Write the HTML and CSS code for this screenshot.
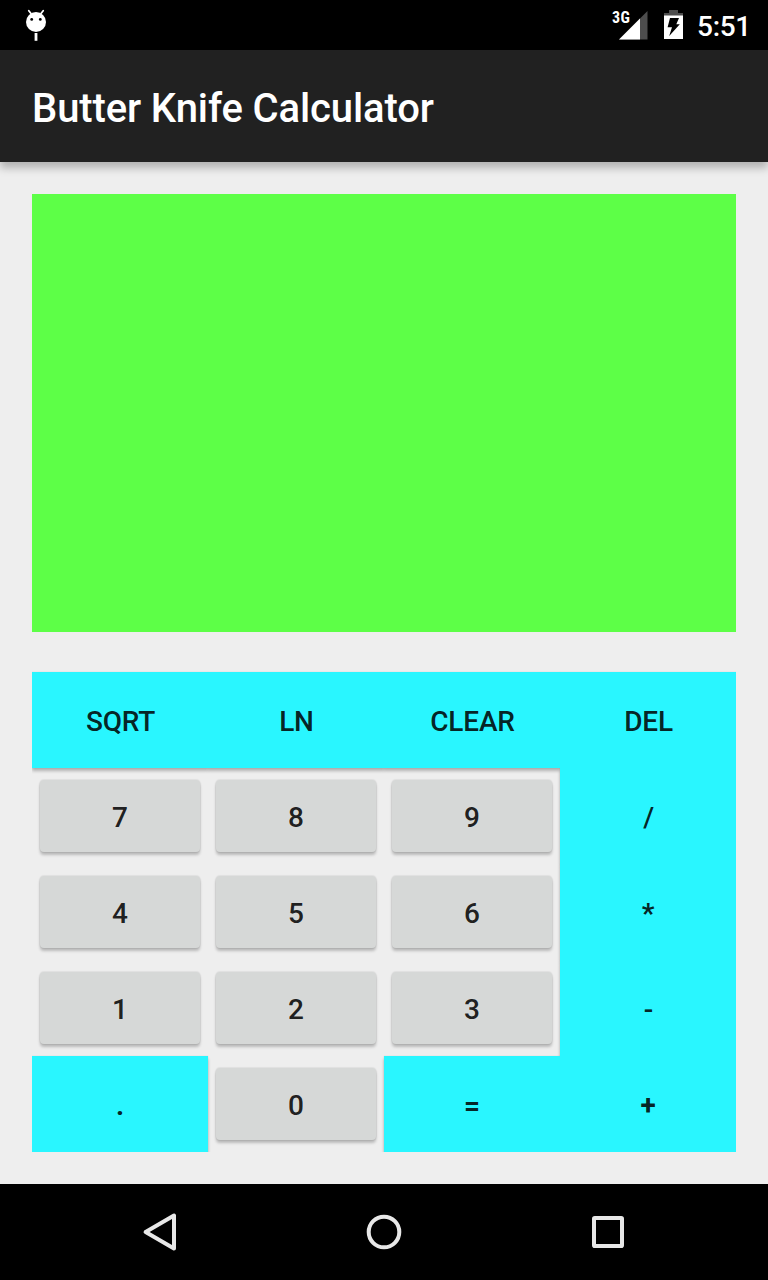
FILE: index.html
```html
<!DOCTYPE html>
<html lang="en">
<head>
<meta charset="utf-8">
<title>Butter Knife Calculator</title>
<link rel="stylesheet" href="styles.css">
</head>
<body>
<div class="screen">
  <div class="status-bar">
    <svg class="debug-icon" width="24" height="34" viewBox="0 0 24 34">
      <path d="M4.8 2.8 7 5.5M19.2 2.8 17 5.5" stroke="#fff" stroke-width="1.8" stroke-linecap="round"/>
      <circle cx="12" cy="14" r="10" fill="#fff"/>
      <circle cx="7.7" cy="11.4" r="1.4"/>
      <circle cx="16.3" cy="11.4" r="1.4"/>
      <path d="M12 25v7.8" stroke="#fff" stroke-width="2.8"/>
    </svg>
    <div class="status-right">
      <div class="signal">
        <svg width="29" height="29" viewBox="0 0 29 29">
          <path d="M0 28.5 28.5 0V28.5Z" fill="#4d4d4d"/>
          <path d="M0 28.5 21 7.5V28.5Z" fill="#fff"/>
        </svg>
        <span class="network">3G</span>
      </div>
      <svg class="battery" width="19" height="29" viewBox="0 0 19 29">
        <path d="M5 0h9v3h5v3H0V3h5Z" fill="#4d4d4d"/>
        <path d="M0 5.5h19V29H0Z" fill="#fff"/>
        <path d="M6 8h9l-2.7 6.2h3.5L5.2 26l2.8-8.7H3.6Z"/>
      </svg>
      <span class="clock">5:51</span>
    </div>
  </div>
  <header class="app-bar"><h1 class="title">Butter Knife Calculator</h1></header>
  <main class="content">
    <div class="display"></div>
    <div class="keypad">
      <button class="key op">SQRT</button><button class="key op">LN</button><button class="key op">CLEAR</button><button class="key op">DEL</button>
      <button class="key digit">7</button><button class="key digit">8</button><button class="key digit">9</button><button class="key op">/</button>
      <button class="key digit">4</button><button class="key digit">5</button><button class="key digit">6</button><button class="key op symbol">*</button>
      <button class="key digit">1</button><button class="key digit">2</button><button class="key digit">3</button><button class="key op">-</button>
      <button class="key op symbol">.</button><button class="key digit">0</button><button class="key op symbol">=</button><button class="key op symbol">+</button>
    </div>
  </main>
  <nav class="nav-bar">
    <svg width="48" height="48" viewBox="0 0 48 48"><path d="M9.6 24 38 7.6V40.4Z"/></svg>
    <svg width="48" height="48" viewBox="0 0 48 48"><circle cx="24" cy="24" r="15.3"/></svg>
    <svg width="48" height="48" viewBox="0 0 48 48"><rect x="10" y="10" width="28" height="28" rx=".8"/></svg>
  </nav>
</div>
</body>
</html>
```
FILE: styles.css
```css
* { box-sizing: border-box; }
body { margin: 0; font-family: Roboto, sans-serif; }
.screen {
  width: 768px;
  height: 1280px;
  display: flex;
  flex-direction: column;
  background: #eee;
}
.status-bar {
  height: 50px;
  padding: 0 17px 0 24px;
  display: flex;
  justify-content: space-between;
  align-items: flex-start;
  background: #000;
  color: #fff;
}
.debug-icon { margin-top: 8px; }
.status-right { display: flex; align-items: flex-start; }
.signal { position: relative; height: 29px; margin: 11px 16px 0 0; }
.signal svg { display: block; }
.network {
  position: absolute;
  left: -7px;
  top: -2px;
  font: 700 16px/18px "Roboto Condensed", Roboto, sans-serif;
  letter-spacing: .3px;
}
.battery { margin: 10px 14px 0 0; }
.clock { font-size: 28px; line-height: 54px; font-weight: 500; letter-spacing: -.3px; }
.app-bar {
  height: 112px;
  padding: 4px 32px 0;
  display: flex;
  align-items: center;
  background: #212121;
  box-shadow: 0 6px 8px rgba(0, 0, 0, .25);
}
.title { margin: 0; color: #fff; font-size: 40px; font-weight: 500; letter-spacing: -.12px; white-space: nowrap; }
.content { flex: 1; padding: 32px; display: flex; flex-direction: column; gap: 40px; }
.display { height: 438px; background: #5dff47; }
.keypad {
  display: grid;
  grid-template-columns: repeat(4, 176px);
  grid-auto-rows: 96px;
  isolation: isolate;
  clip-path: inset(-2px 0 0 0);
}
.key {
  position: relative;
  margin: 0;
  border: 0;
  padding: 3px 0 0;
  font: 500 28px/32px Roboto, sans-serif;
  color: rgba(0, 0, 0, .87);
}
.op { padding-left: 1px; background: #29f6ff; letter-spacing: -.2px; }
.symbol { padding-left: 0; font-weight: 700; }
/* Shadows sit behind every key so neighbouring keys join without a seam. */
.op::before {
  content: "";
  position: absolute;
  inset: 0;
  z-index: -1;
  box-shadow: 0 3px 3px rgba(0, 0, 0, .25), 0 0 1px rgba(0, 0, 0, .15);
}
.digit {
  margin: 12px 8px;
  border-radius: 4px;
  background: #d6d8d7;
  box-shadow: 0 3px 3px rgba(0, 0, 0, .22), 0 0 1px 1px rgba(0, 0, 0, .06);
}
.nav-bar {
  height: 96px;
  padding: 0 136px;
  display: flex;
  justify-content: space-between;
  align-items: center;
  background: #000;
}
.nav-bar svg { fill: none; stroke: #e8e8e8; stroke-width: 4; stroke-linejoin: round; }
```
